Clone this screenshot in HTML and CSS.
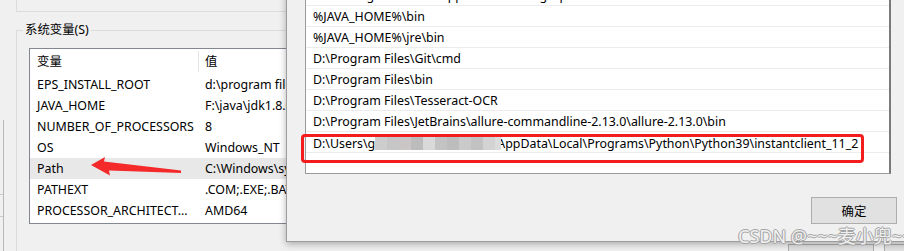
FILE: index.html
```html
<!DOCTYPE html>
<html lang="zh-CN">
<head>
    <meta charset="UTF-8">
    <title>环境变量</title>
    <link rel="stylesheet" href="styles.css">
</head>
<body>
    <div class="screen">
        <!-- behind: 环境变量 dialog -->
        <div class="env-dialog">
            <div class="user-group-end"></div>
            <fieldset class="sys-group">
                <legend>系统变量(S)</legend>
                <div class="var-list">
                    <div class="var-head">
                        <span class="col-name">变量</span>
                        <span class="col-value">值</span>
                    </div>
                    <div class="var-row"><span class="col-name">EPS_INSTALL_ROOT</span><span class="col-value">d:\program files\eps</span></div>
                    <div class="var-row"><span class="col-name">JAVA_HOME</span><span class="col-value">F:\java\jdk1.8.0_191</span></div>
                    <div class="var-row"><span class="col-name">NUMBER_OF_PROCESSORS</span><span class="col-value">8</span></div>
                    <div class="var-row"><span class="col-name">OS</span><span class="col-value">Windows_NT</span></div>
                    <div class="var-row hover"><span class="col-name">Path</span><span class="col-value">C:\Windows\system32;C:\Windows</span></div>
                    <div class="var-row"><span class="col-name">PATHEXT</span><span class="col-value">.COM;.EXE;.BAT;.CMD;.VBS</span></div>
                    <div class="var-row"><span class="col-name">PROCESSOR_ARCHITECT...</span><span class="col-value">AMD64</span></div>
                </div>
                <div class="group-actions">
                    <button class="win-btn">新建(W)...</button>
                    <button class="win-btn">编辑(I)...</button>
                </div>
            </fieldset>
        </div>

        <div class="side-window"></div>

        <svg class="arrow" width="904" height="251" viewBox="0 0 904 251">
            <polygon points="91,165 105,157 104,161.5 181,170.5 181,173 109,170.5 110,175.5" fill="#f42a2a"/>
        </svg>

        <!-- front: 编辑环境变量 dialog -->
        <div class="edit-dialog">
            <div class="path-list">
                <div class="path-row">C:\Users\gaoxiaodou\AppData\Roaming\npm</div>
                <div class="path-row">%JAVA_HOME%\bin</div>
                <div class="path-row">%JAVA_HOME%\jre\bin</div>
                <div class="path-row">D:\Program Files\Git\cmd</div>
                <div class="path-row">D:\Program Files\bin</div>
                <div class="path-row">D:\Program Files\Tesseract-OCR</div>
                <div class="path-row">D:\Program Files\JetBrains\allure-commandline-2.13.0\allure-2.13.0\bin</div>
                <div class="path-row">D:\Users\g<span class="mosaic"><i></i><i></i><i></i><i></i><i></i><i></i><i></i><i></i><i></i><i></i><i></i></span>AppData\Local\Programs\Python\Python39\instantclient_11_2</div>
            </div>
            <div class="dlg-actions">
                <button class="win-btn ok">确定</button>
            </div>
            <div class="mark-box"></div>
        </div>

        <div class="watermark">CSDN @~~~麦小兜~~~</div>
    </div>
</body>
</html>
```

FILE: styles.css
```css
body {
    margin: 0;
    background: #f0f0f0;
    font-family: "Noto Sans", "Noto Sans CJK SC", sans-serif;
    font-size: 12.4px;
    color: #000;
}
.screen {
    position: relative;
    width: 904px;
    height: 251px;
    overflow: hidden;
    background: #f0f0f0;
}
.env-dialog {
    width: 1000px;
}
.user-group-end {
    margin-left: 16px;
    height: 11px;
    border-left: 1px solid #dcdcdc;
    border-bottom: 1px solid #dcdcdc;
}
.sys-group {
    margin: 10px 0 0 16px;
    padding: 0 0 0 6px;
    border: 1px solid #dcdcdc;
    border-right: none;
    border-bottom: none;
    min-inline-size: 0;
}
.sys-group legend {
    padding: 0 2px;
    line-height: 16px;
    color: #000;
}
.var-list {
    margin: 10px 0 0 6px;
    width: 420px;
    padding-bottom: 2px;
    background: #fff;
    border: 1px solid #828790;
}
.var-head,
.var-row {
    display: grid;
    grid-template-columns: 168px 1fr;
    height: 21px;
    line-height: 21px;
    white-space: nowrap;
}
.var-head {
    height: 25px;
    line-height: 25px;
}
.var-head .col-value {
    border-left: 1px solid #e5e5e5;
    margin: 2px 0;
    line-height: 21px;
    padding-left: 6px;
}
.col-name {
    padding-left: 7px;
    overflow: hidden;
}
.col-value {
    padding-left: 7px;
}
.var-row.hover {
    background: #e8e8e8;
}
.group-actions {
    display: flex;
    gap: 10px;
    margin: 20px 0 0 765px;
}
.win-btn {
    width: 86px;
    height: 27px;
    padding: 0;
    font: inherit;
    color: #000;
    background: #e1e1e1;
    border: 1px solid #adadad;
}
.side-window {
    position: absolute;
    left: 0;
    top: 120px;
    width: 3px;
    height: 140px;
    border-right: 1px solid #b8b8b8;
    background: linear-gradient(#f0f0f0 74px, #c9c9c9 74px, #c9c9c9 75px, #f0f0f0 75px, #f0f0f0 96px, #c9c9c9 96px, #c9c9c9 97px, #f0f0f0 97px);
}
.arrow {
    position: absolute;
    left: 0;
    top: 0;
}
.edit-dialog {
    position: absolute;
    left: 286px;
    top: -40px;
    width: 700px;
    height: 282px;
    box-sizing: border-box;
    padding: 23px 0 0 18px;
    background: #f0f0f0;
    border: 1px solid #9d9d9d;
    box-shadow: 0 2px 7px rgba(0, 0, 0, 0.3);
}
.path-list {
    width: 586px;
    height: 190px;
    box-sizing: border-box;
    overflow: hidden;
    background: #fff;
    border: 1px solid #9a9a9a;
    border-right: 2px solid #7a7a7a;
}
.path-row {
    height: 20px;
    line-height: 21px;
    padding-left: 7px;
    border-bottom: 1px solid #ececec;
    white-space: nowrap;
}
.path-row:last-child {
    line-height: 23px;
}
.mosaic {
    position: relative;
    z-index: 1;
    display: inline-flex;
    vertical-align: middle;
    margin: -2px -4px 0 0;
    height: 13px;
}
.mosaic i {
    width: 12px;
    background: #cdcdcd;
}
.mosaic i:nth-child(2) { background: #c6c6c6; }
.mosaic i:nth-child(3) { background: #cbc6c6; }
.mosaic i:nth-child(4) { background: #bcbcbc; }
.mosaic i:nth-child(5) { background: #d9d9d9; }
.mosaic i:nth-child(6) { background: #c3c3c3; }
.mosaic i:nth-child(7) { background: #bdbdbd; }
.mosaic i:nth-child(8) { background: #cacaca; }
.mosaic i:nth-child(9) { background: #c2c2c2; }
.mosaic i:nth-child(10) { background: #d3d3d3; }
.mosaic i:nth-child(11) { width: 6px; background: #dcdcdc; }
.dlg-actions {
    margin: 23px 0 0 506px;
}
.mark-box {
    position: absolute;
    left: 14px;
    top: 173px;
    width: 563px;
    height: 29px;
    box-sizing: border-box;
    border: 3px solid #f31d1d;
    border-radius: 4px;
}
.watermark {
    position: absolute;
    left: 738px;
    top: 222px;
    font-size: 18px;
    white-space: nowrap;
    color: rgba(255, 255, 255, 0.85);
    text-shadow: 1px 0 0 #a5a5a5, -1px 0 0 #a5a5a5, 0 1px 0 #a5a5a5, 0 -1px 0 #a5a5a5;
}
```
